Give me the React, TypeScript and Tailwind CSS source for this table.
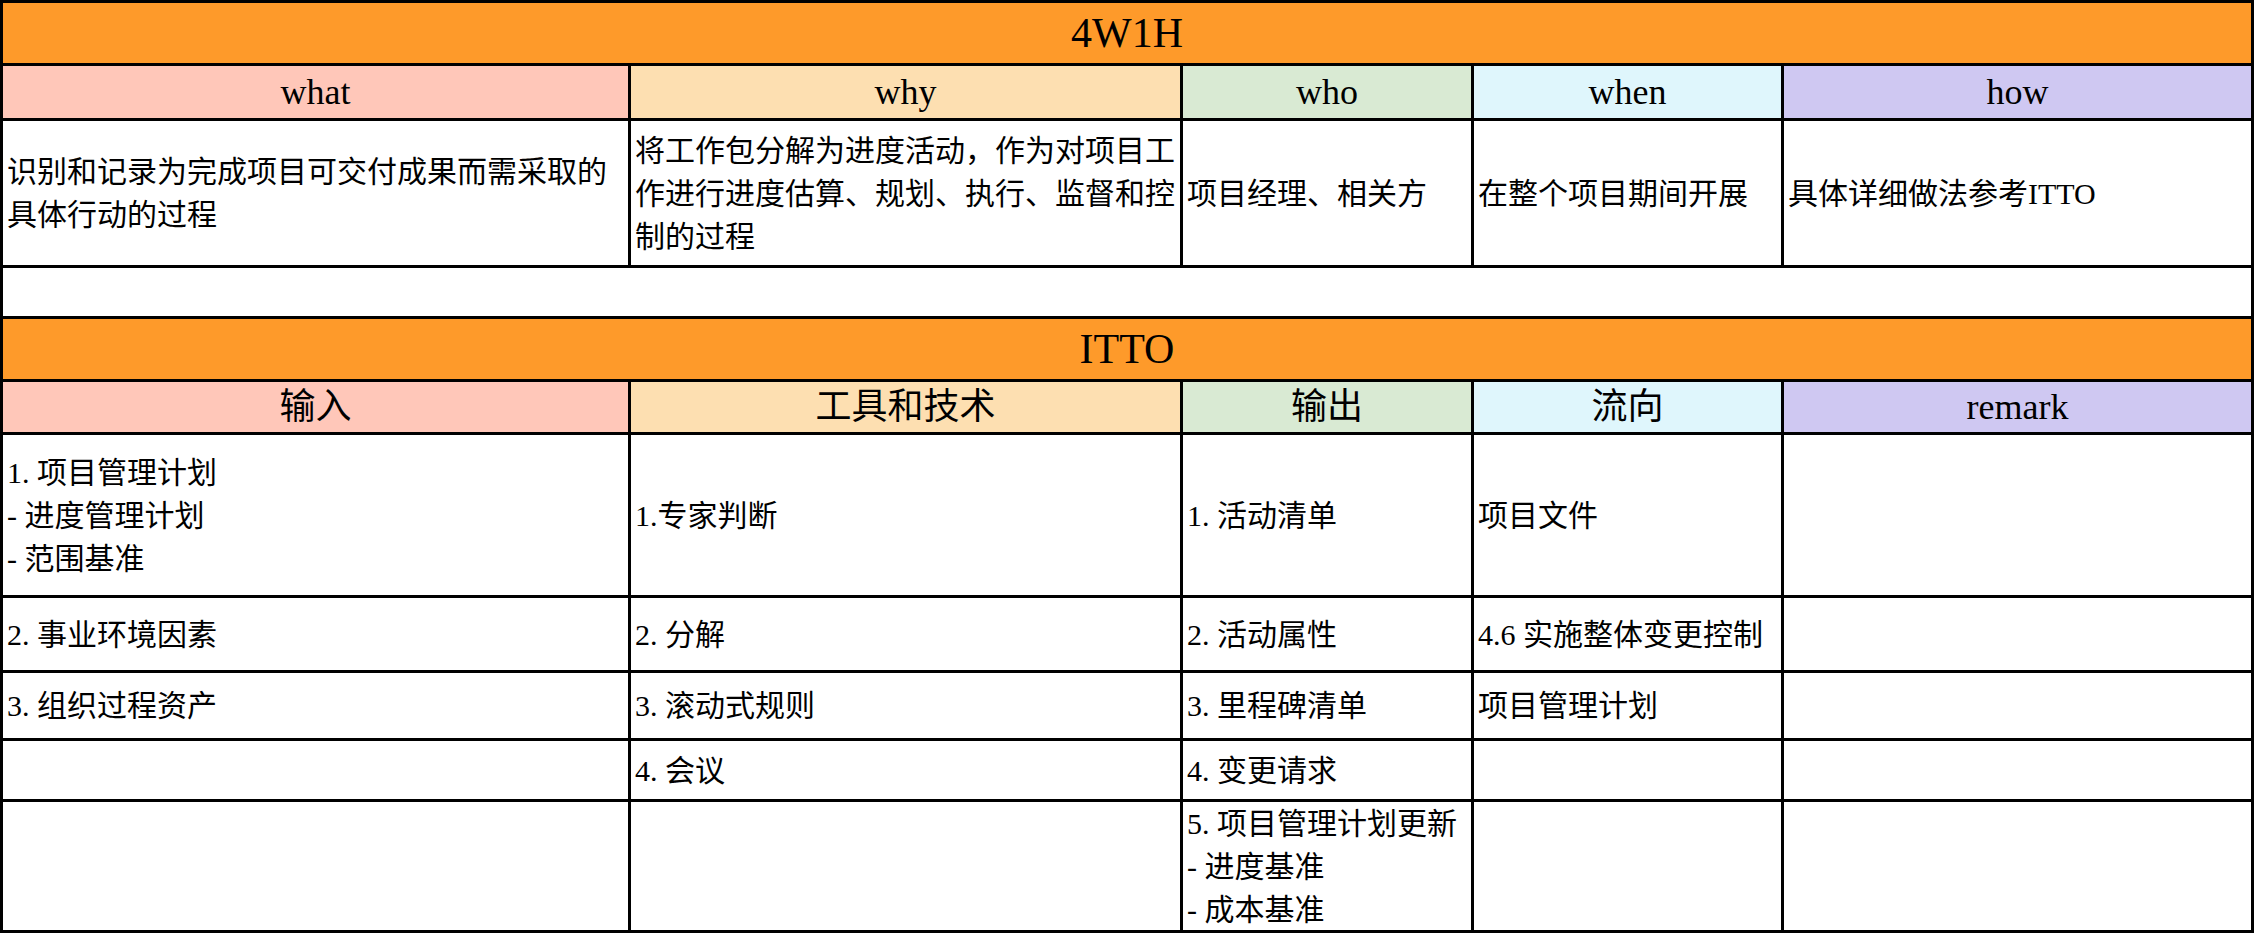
import React from "react";

const font = { fontFamily: "'Liberation Serif', 'Noto Sans CJK SC', serif" };

type Cell = { text?: string[]; span?: boolean };

const headBg = ["bg-[#ffc7b9]", "bg-[#fddfb1]", "bg-[#d9ead3]", "bg-[#dff6fc]", "bg-[#cfc8f2]"];

function Title({ children }: { children: React.ReactNode }) {
    return (
        <div className="col-span-5 flex items-center justify-center bg-[#fe9a2a] text-[42px] text-black">
            {children}
        </div>
    );
}

function HeadRow({ labels }: { labels: string[] }) {
    return (
        <>
            {labels.map((l, i) => (
                <div key={i} className={`flex items-center justify-center text-[36px] leading-none text-black ${headBg[i]}`}>
                    {l}
                </div>
            ))}
        </>
    );
}

function BodyRow({ cells }: { cells: string[][] }) {
    return (
        <>
            {cells.map((lines, i) => (
                <div key={i} className="flex flex-col justify-center bg-white pl-[4px] pr-[2px] text-[30px] leading-[43px] text-black">
                    {lines.map((t, j) => (
                        <div key={j}>{t}</div>
                    ))}
                </div>
            ))}
        </>
    );
}

export default function App() {
    return (
        <div
            className="grid w-[2254px] grid-cols-[625px_549px_288px_307px_467px] grid-rows-[60px_52px_144px_48px_60px_50px_160px_72px_65px_58px_128px] gap-[3px] bg-black p-[3px]"
            style={font}
        >
            <Title>4W1H</Title>
            <HeadRow labels={["what", "why", "who", "when", "how"]} />
            <BodyRow
                cells={[
                    ["识别和记录为完成项目可交付成果而需采取的具体行动的过程"],
                    ["将工作包分解为进度活动，作为对项目工作进行进度估算、规划、执行、监督和控制的过程"],
                    ["项目经理、相关方"],
                    ["在整个项目期间开展"],
                    ["具体详细做法参考ITTO"],
                ]}
            />
            <div className="col-span-5 bg-white" />
            <Title>ITTO</Title>
            <HeadRow labels={["输入", "工具和技术", "输出", "流向", "remark"]} />
            <BodyRow
                cells={[
                    ["1. 项目管理计划", "- 进度管理计划", "- 范围基准"],
                    ["1.专家判断"],
                    ["1. 活动清单"],
                    ["项目文件"],
                    [],
                ]}
            />
            <BodyRow cells={[["2. 事业环境因素"], ["2. 分解"], ["2. 活动属性"], ["4.6 实施整体变更控制"], []]} />
            <BodyRow cells={[["3. 组织过程资产"], ["3. 滚动式规则"], ["3. 里程碑清单"], ["项目管理计划"], []]} />
            <BodyRow cells={[[], ["4. 会议"], ["4. 变更请求"], [], []]} />
            <BodyRow
                cells={[[], [], ["5. 项目管理计划更新", "- 进度基准", "- 成本基准"], [], []]}
            />
        </div>
    );
}
